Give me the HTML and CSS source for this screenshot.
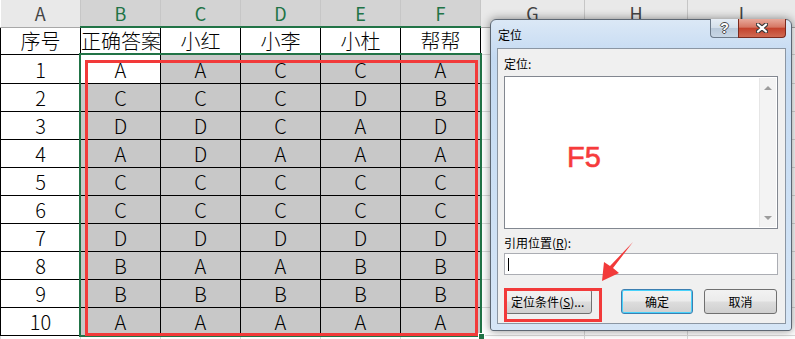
FILE: index.html
```html
<!DOCTYPE html>
<html lang="zh-CN">
<head>
  <meta charset="UTF-8" />
  <title>定位</title>
  <link rel="stylesheet" href="styles.css">
</head>
<body>
  <div class="sheet">
    <table class="grid">
      <colgroup>
        <col class="c-a"><col class="c-n"><col class="c-n"><col class="c-n"><col class="c-n"><col class="c-n">
        <col class="c-g"><col class="c-h"><col class="c-i">
      </colgroup>
      <tr class="heads">
        <th>A</th><th class="sel">B</th><th class="sel">C</th><th class="sel">D</th><th class="sel">E</th><th class="sel">F</th>
        <th>G</th><th>H</th><th>I</th>
      </tr>
      <tr class="title">
        <td>序号</td><td class="wide">正确答案</td><td>小红</td><td>小李</td><td>小杜</td><td>帮帮</td>
        <td class="free"></td><td class="free"></td><td class="free"></td>
      </tr>
      <tr class="first">
        <td>1</td><td>A</td><td class="fill">A</td><td class="fill">C</td><td class="fill">C</td><td class="fill">A</td>
        <td class="free"></td><td class="free"></td><td class="free"></td>
      </tr>
      <tr>
        <td>2</td><td class="fill">C</td><td class="fill">C</td><td class="fill">C</td><td class="fill">D</td><td class="fill">B</td>
        <td class="free"></td><td class="free"></td><td class="free"></td>
      </tr>
      <tr>
        <td>3</td><td class="fill">D</td><td class="fill">D</td><td class="fill">C</td><td class="fill">A</td><td class="fill">D</td>
        <td class="free"></td><td class="free"></td><td class="free"></td>
      </tr>
      <tr>
        <td>4</td><td class="fill">A</td><td class="fill">D</td><td class="fill">A</td><td class="fill">A</td><td class="fill">A</td>
        <td class="free"></td><td class="free"></td><td class="free"></td>
      </tr>
      <tr>
        <td>5</td><td class="fill">C</td><td class="fill">C</td><td class="fill">C</td><td class="fill">C</td><td class="fill">C</td>
        <td class="free"></td><td class="free"></td><td class="free"></td>
      </tr>
      <tr>
        <td>6</td><td class="fill">C</td><td class="fill">C</td><td class="fill">C</td><td class="fill">C</td><td class="fill">C</td>
        <td class="free"></td><td class="free"></td><td class="free"></td>
      </tr>
      <tr>
        <td>7</td><td class="fill">D</td><td class="fill">D</td><td class="fill">D</td><td class="fill">D</td><td class="fill">D</td>
        <td class="free"></td><td class="free"></td><td class="free"></td>
      </tr>
      <tr>
        <td>8</td><td class="fill">B</td><td class="fill">A</td><td class="fill">A</td><td class="fill">B</td><td class="fill">B</td>
        <td class="free"></td><td class="free"></td><td class="free"></td>
      </tr>
      <tr>
        <td>9</td><td class="fill">B</td><td class="fill">B</td><td class="fill">B</td><td class="fill">B</td><td class="fill">B</td>
        <td class="free"></td><td class="free"></td><td class="free"></td>
      </tr>
      <tr>
        <td>10</td><td class="fill">A</td><td class="fill">A</td><td class="fill">A</td><td class="fill">A</td><td class="fill">A</td>
        <td class="free"></td><td class="free"></td><td class="free"></td>
      </tr>
      <tr class="tail">
        <td class="free"></td><td class="free"></td><td class="free"></td><td class="free"></td><td class="free"></td><td class="free"></td>
        <td class="free"></td><td class="free"></td><td class="free"></td>
      </tr>
    </table>

    <div class="selection"><span class="handle"></span></div>
    <div class="redbox"></div>

    <div class="dialog">
      <div class="titlebar">
        <span class="caption">定位</span>
        <div class="caps">
          <span class="cap help">?</span>
          <span class="cap close">
            <svg width="12" height="10" viewBox="0 0 12 10">
              <path d="M2 1.5 L10 8.5 M10 1.5 L2 8.5" stroke="#3b3b3b" stroke-width="4.4" stroke-linecap="round"/>
              <path d="M2 1.5 L10 8.5 M10 1.5 L2 8.5" stroke="#fff" stroke-width="2.2" stroke-linecap="round"/>
            </svg>
          </span>
        </div>
      </div>
      <div class="panel">
        <div class="label">定位:</div>
        <div class="listbox">
          <div class="hint">F5</div>
          <div class="vscroll">
            <span class="tri up"></span>
            <span class="tri down"></span>
          </div>
        </div>
        <div class="label ref">引用位置(<u>R</u>):</div>
        <div class="input"><span class="caret"></span></div>
        <div class="buttons">
          <span class="marked"><button class="btn special">定位条件(<u>S</u>)...</button></span>
          <button class="btn ok">确定</button>
          <button class="btn cancel">取消</button>
        </div>
      </div>
    </div>

    <svg class="arrow" width="795" height="339" viewBox="0 0 795 339">
      <polygon points="633,242 613,268 619,273 602,281 604,262 610,266" fill="#f23a3a"/>
    </svg>
  </div>
</body>
</html>
```

FILE: styles.css
```css
* {
  box-sizing: border-box;
}
body {
  margin: 0;
  background: #fff;
  overflow: hidden;
  font-family: "Noto Sans CJK SC", sans-serif;
}
.sheet {
  position: relative;
  width: 795px;
  height: 339px;
  overflow: hidden;
}

/* grid */
.grid {
  border-collapse: collapse;
  table-layout: fixed;
  width: 795px;
}
.c-a, .c-n {
  width: 80px;
}
.c-g {
  width: 104px;
}
.c-h {
  width: 103px;
}
.c-i {
  width: 108px;
}
.grid th {
  height: 27px;
  padding: 0;
  font-weight: normal;
  font-size: 18px;
  line-height: 20px;
  color: #444;
  background: #e9e9e9;
  border-right: 1px solid #c6c6c6;
  border-bottom: 1px solid #a8a8a8;
}
.grid th.sel {
  background: #d3d3d3;
  color: #217346;
  border-bottom: 2px solid #217346;
}
.grid td {
  height: 28px;
  padding: 0 0 1px;
  text-align: center;
  vertical-align: bottom;
  font-size: 20px;
  line-height: 24px;
  font-weight: 300;
  color: #000;
  border: 1px solid #000;
  white-space: nowrap;
  overflow: hidden;
}
.grid tr.title td {
  height: 27px;
}
.grid tr.first td {
  height: 29px;
}
.grid td.wide {
  text-align: left;
  overflow: visible;
}
.grid td.fill {
  background: #c8c8c8;
}
.grid td.free {
  border: 1px solid #d9d9d9;
}

/* overlays on the sheet */
.selection {
  position: absolute;
  left: 79px;
  top: 53px;
  width: 403px;
  height: 284px;
  border: 2px solid #217346;
}
.handle {
  position: absolute;
  right: -5px;
  bottom: -5px;
  width: 7px;
  height: 7px;
  background: #217346;
  border: 1px solid #fff;
}
.redbox {
  position: absolute;
  left: 85px;
  top: 60px;
  width: 393px;
  height: 276px;
  border: 3px solid #f23a3a;
}
.arrow {
  position: absolute;
  left: 0;
  top: 0;
}

/* dialog */
.dialog {
  position: absolute;
  left: 490px;
  top: 19px;
  width: 302px;
  height: 312px;
  display: flex;
  flex-direction: column;
  border: 1px solid #5d6773;
  border-radius: 6px 6px 3px 3px;
  background: linear-gradient(180deg, #dbe8f6 0%, #c4daf2 12%, #c9def4 40%, #d5e5f6 100%);
  box-shadow: 0 0 10px rgba(0, 0, 0, 0.45);
  font-size: 12px;
  color: #000;
}
.titlebar {
  height: 28px;
  display: flex;
  align-items: center;
  justify-content: space-between;
  padding-left: 7px;
  padding-right: 5px;
}
.caption {
  line-height: 16px;
  margin-top: 1px;
}
.caps {
  align-self: flex-start;
  display: flex;
  margin-top: -1px;
}
.cap {
  height: 19px;
  display: flex;
  align-items: center;
  justify-content: center;
  border: 1px solid #6c7a8a;
  border-top: none;
}
.help {
  width: 28px;
  border-right: none;
  border-radius: 0 0 0 4px;
  background: linear-gradient(180deg, #e6edf5 0%, #d4dfea 48%, #b9c9da 52%, #c8d6e5 100%);
  font-family: "Liberation Sans", sans-serif;
  font-weight: bold;
  font-size: 14px;
  color: #fff;
  text-shadow: -1px 0 #4a4a4a, 1px 0 #4a4a4a, 0 -1px #4a4a4a, 0 1px #4a4a4a;
}
.close {
  width: 48px;
  border-color: #7b2a1e;
  border-radius: 0 0 4px 0;
  background: linear-gradient(180deg, #e8a99b 0%, #d67764 45%, #c4432d 52%, #d06a52 100%);
}
.panel {
  flex: 1;
  margin: 0 5px 6px 6px;
  padding: 7px 7px 0 6px;
  display: flex;
  flex-direction: column;
  background: #f0f0f0;
  border: 1px solid #8b96a3;
}
.label {
  line-height: 16px;
}
.label.ref {
  margin-top: 6px;
}
.listbox {
  margin-top: 4px;
  height: 153px;
  display: flex;
  background: #fff;
  border: 1px solid #828790;
}
.hint {
  flex: 1;
  padding: 66px 0 0 62px;
  font-family: "Liberation Sans", sans-serif;
  font-size: 29px;
  line-height: 29px;
  color: #f63b3b;
  -webkit-text-stroke: 0.6px #f63b3b;
}
.vscroll {
  width: 17px;
  margin: 1px 1px 1px 0;
  display: flex;
  flex-direction: column;
  justify-content: space-between;
  align-items: center;
  padding: 8px 0 7px;
  background: #f3f3f3;
  border-left: 1px solid #e6e6e6;
}
.tri {
  width: 0;
  height: 0;
  border-left: 4px solid transparent;
  border-right: 4px solid transparent;
}
.tri.up {
  border-bottom: 4px solid #9c9c9c;
}
.tri.down {
  border-top: 4px solid #9c9c9c;
}
.input {
  margin-top: 2px;
  height: 22px;
  padding: 4px 0 0 3px;
  background: #fff;
  border: 1px solid #abadb3;
}
.caret {
  display: block;
  width: 1px;
  height: 13px;
  background: #000;
}
.buttons {
  margin-top: 14px;
  display: flex;
  align-items: center;
}
.btn {
  height: 25px;
  padding: 0;
  font-family: "Noto Sans CJK SC", sans-serif;
  font-size: 12px;
  color: #000;
  border: 1px solid #707070;
  border-radius: 3px;
  background: linear-gradient(180deg, #f2f2f2 0%, #ebebeb 48%, #dddddd 52%, #cfcfcf 100%);
}
.marked {
  position: relative;
  display: flex;
  margin-left: 1px;
}
.marked::after {
  content: "";
  position: absolute;
  left: -1px;
  top: -1px;
  width: 92px;
  height: 28px;
  border: 3px solid #f23a3a;
}
.special {
  width: 87px;
  text-align: left;
  padding-left: 5px;
}
.ok {
  width: 72px;
  margin-left: 29px;
  border-color: #3c7fb1;
  box-shadow: inset 0 0 0 1px #48d2fb;
}
.cancel {
  width: 73px;
  margin-left: 11px;
}
```
